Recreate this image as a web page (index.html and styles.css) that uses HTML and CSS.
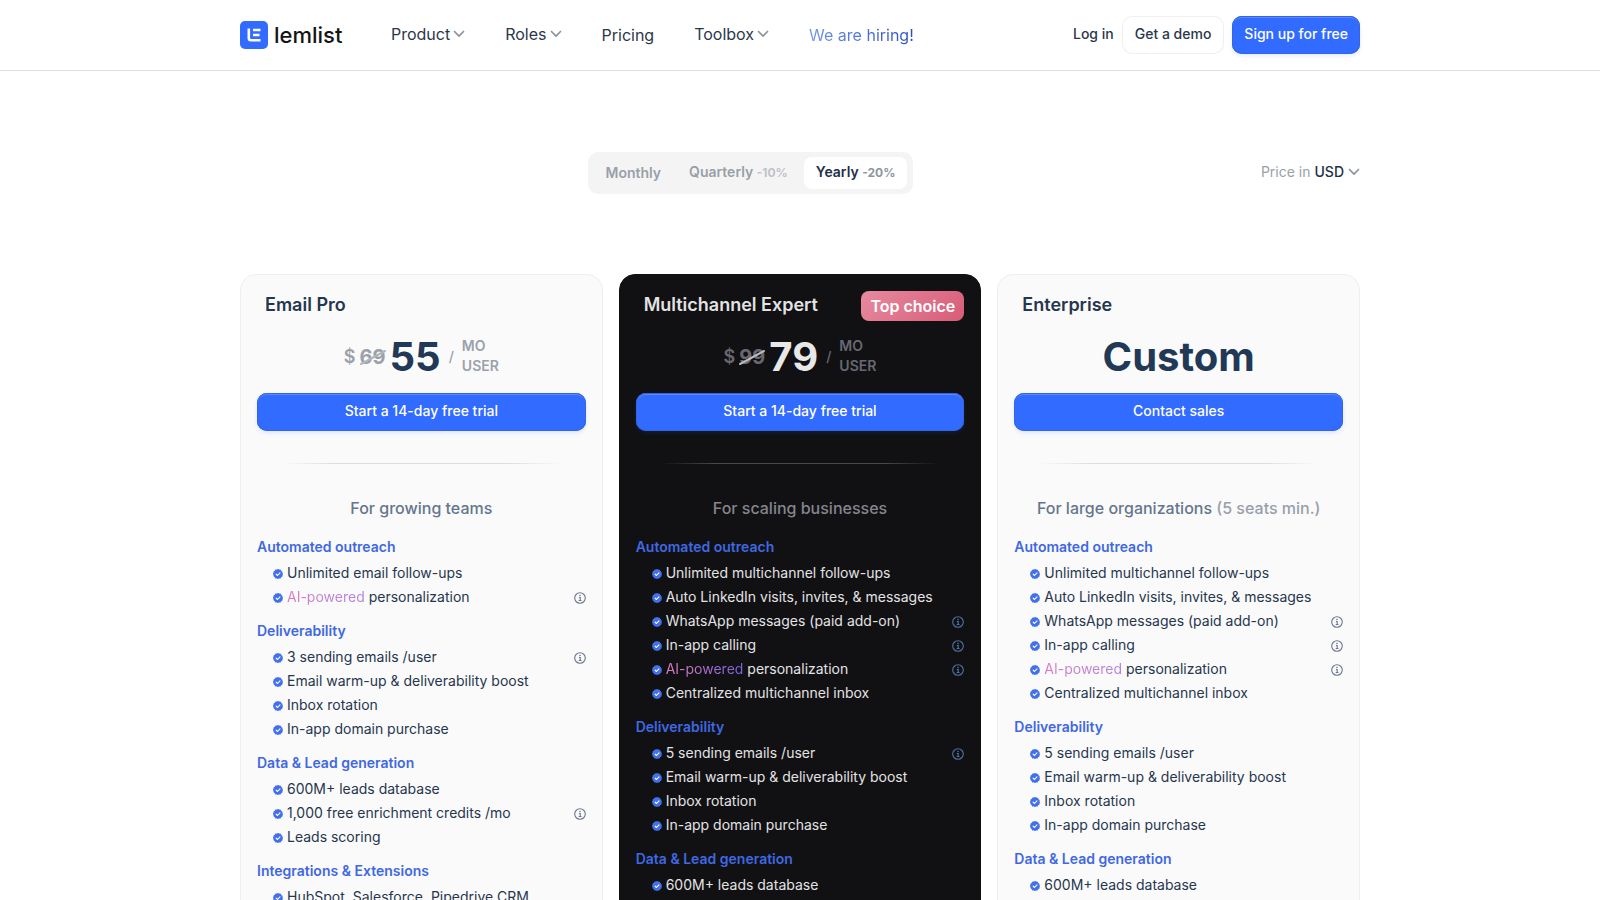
FILE: index.html
```html
<!DOCTYPE html>
<html lang="en">
<head>
<meta charset="utf-8">
<meta name="viewport" content="width=device-width, initial-scale=1">
<title>lemlist pricing</title>
<link rel="stylesheet" href="styles.css">
</head>
<body>
<svg class="sprite" aria-hidden="true">
  <symbol id="chevron" viewBox="0 0 12 12"><path d="M1.500 3.500 6 8.200l4.500-4.700" fill="none" stroke="currentColor" stroke-width="1.700" stroke-linecap="round" stroke-linejoin="round"/></symbol>
  <symbol id="check" viewBox="0 0 10 10"><path d="M5 0l1.300.6 1.450.05.6 1.300L9.500 3.100 9.600 4.500 10 5l-.4 1.300-.2 1.100-1.200.8-.7 1.200-1.400.1L5 10l-1.200-.5-1.400-.1-.7-1.200L.6 7.300.4 6 0 5l.4-1.300.2-1.100 1.200-.8.7-1.200L3.900.5z" fill="#4270ea"/><path d="M3.100 5.100 4.500 6.500 7 3.800" fill="none" stroke="#fff" stroke-width="1.100" stroke-linecap="round" stroke-linejoin="round"/></symbol>
  <symbol id="info" viewBox="0 0 12 12"><circle cx="6" cy="6" r="5.300" fill="none" stroke="currentColor" stroke-width="1.100"/><path d="M4.900 5.500h1.300v3M4.700 8.500h2.800" fill="none" stroke="currentColor" stroke-width="1.100"/><circle cx="6" cy="3.500" r=".8" fill="currentColor"/></symbol>
</svg>
<header class="header">
  <div class="container header-row">
    <a class="logo" href="#">
      <svg class="logo-mark" viewBox="0 0 28 28" aria-hidden="true"><rect width="28" height="28" rx="5" fill="#316bff"/><path d="M8.800 7.500v9.500q0 2.200 2.200 2.200h9.500M13 9h7.500M13 14h6.500" fill="none" stroke="#fff" stroke-width="2.600"/></svg>
      <span>lemlist</span>
    </a>
    <nav class="nav">
      <a class="has-menu" href="#">Product <svg class="chevron"><use href="#chevron"/></svg></a>
      <a class="has-menu" href="#">Roles <svg class="chevron"><use href="#chevron"/></svg></a>
      <a href="#">Pricing</a>
      <a class="has-menu" href="#">Toolbox <svg class="chevron"><use href="#chevron"/></svg></a>
      <a href="#"><span class="hiring">We are hiring!</span></a>
    </nav>
    <div class="actions">
      <a class="login" href="#">Log in</a>
      <a class="btn btn-light" href="#">Get a demo</a>
      <a class="btn btn-primary" href="#">Sign up for free</a>
    </div>
  </div>
</header>
<main class="container">
  <div class="controls">
    <div class="tabs" role="group" aria-label="Billing period">
      <button type="button" class="tab">Monthly</button>
      <button type="button" class="tab">Quarterly <small>-10%</small></button>
      <button type="button" class="tab active" aria-pressed="true">Yearly <small>-20%</small></button>
    </div>
    <div class="currency">
      <label for="currency">Price in</label>
      <select id="currency"><option>USD</option><option>EUR</option></select>
      <svg class="chevron" aria-hidden="true"><use href="#chevron"/></svg>
    </div>
  </div>
  <div class="plans">
    <section class="card">
      <div class="card-head"><h2>Email Pro</h2></div>
      <div class="price"><span class="sign">$</span><s class="old">69<svg viewBox="0 0 26 16" aria-hidden="true"><path d="M1 15 25 2"/></svg></s><strong>55</strong><span class="slash">/</span><span class="unit">MO<br>USER</span></div>
      <button type="button" class="btn btn-primary">Start a 14-day free trial</button>
      <hr>
      <p class="audience">For growing teams</p>
      <h3>Automated outreach</h3>
      <ul>
        <li><svg class="check"><use href="#check"/></svg><span>Unlimited email follow-ups</span></li>
        <li><svg class="check"><use href="#check"/></svg><span><span class="ai">AI-powered</span> personalization</span><svg class="info"><use href="#info"/></svg></li>
      </ul>
      <h3>Deliverability</h3>
      <ul>
        <li><svg class="check"><use href="#check"/></svg><span>3 sending emails /user</span><svg class="info"><use href="#info"/></svg></li>
        <li><svg class="check"><use href="#check"/></svg><span>Email warm-up &amp; deliverability boost</span></li>
        <li><svg class="check"><use href="#check"/></svg><span>Inbox rotation</span></li>
        <li><svg class="check"><use href="#check"/></svg><span>In-app domain purchase</span></li>
      </ul>
      <h3>Data &amp; Lead generation</h3>
      <ul>
        <li><svg class="check"><use href="#check"/></svg><span>600M+ leads database</span></li>
        <li><svg class="check"><use href="#check"/></svg><span>1,000 free enrichment credits /mo</span><svg class="info"><use href="#info"/></svg></li>
        <li><svg class="check"><use href="#check"/></svg><span>Leads scoring</span></li>
      </ul>
      <h3>Integrations &amp; Extensions</h3>
      <ul>
        <li><svg class="check"><use href="#check"/></svg><span>HubSpot, Salesforce, Pipedrive CRM</span></li>
      </ul>
    </section>
    <section class="card dark">
      <div class="card-head"><h2>Multichannel Expert</h2><span class="badge">Top choice</span></div>
      <div class="price"><span class="sign">$</span><s class="old">99<svg viewBox="0 0 26 16" aria-hidden="true"><path d="M1 15 25 2"/></svg></s><strong>79</strong><span class="slash">/</span><span class="unit">MO<br>USER</span></div>
      <button type="button" class="btn btn-primary">Start a 14-day free trial</button>
      <hr>
      <p class="audience">For scaling businesses</p>
      <h3>Automated outreach</h3>
      <ul>
        <li><svg class="check"><use href="#check"/></svg><span>Unlimited multichannel follow-ups</span></li>
        <li><svg class="check"><use href="#check"/></svg><span>Auto LinkedIn visits, invites, &amp; messages</span></li>
        <li><svg class="check"><use href="#check"/></svg><span>WhatsApp messages (paid add-on)</span><svg class="info"><use href="#info"/></svg></li>
        <li><svg class="check"><use href="#check"/></svg><span>In-app calling</span><svg class="info"><use href="#info"/></svg></li>
        <li><svg class="check"><use href="#check"/></svg><span><span class="ai">AI-powered</span> personalization</span><svg class="info"><use href="#info"/></svg></li>
        <li><svg class="check"><use href="#check"/></svg><span>Centralized multichannel inbox</span></li>
      </ul>
      <h3>Deliverability</h3>
      <ul>
        <li><svg class="check"><use href="#check"/></svg><span>5 sending emails /user</span><svg class="info"><use href="#info"/></svg></li>
        <li><svg class="check"><use href="#check"/></svg><span>Email warm-up &amp; deliverability boost</span></li>
        <li><svg class="check"><use href="#check"/></svg><span>Inbox rotation</span></li>
        <li><svg class="check"><use href="#check"/></svg><span>In-app domain purchase</span></li>
      </ul>
      <h3>Data &amp; Lead generation</h3>
      <ul>
        <li><svg class="check"><use href="#check"/></svg><span>600M+ leads database</span></li>
      </ul>
    </section>
    <section class="card">
      <div class="card-head"><h2>Enterprise</h2></div>
      <div class="price"><strong>Custom</strong></div>
      <button type="button" class="btn btn-primary">Contact sales</button>
      <hr>
      <p class="audience">For large organizations <span>(5 seats min.)</span></p>
      <h3>Automated outreach</h3>
      <ul>
        <li><svg class="check"><use href="#check"/></svg><span>Unlimited multichannel follow-ups</span></li>
        <li><svg class="check"><use href="#check"/></svg><span>Auto LinkedIn visits, invites, &amp; messages</span></li>
        <li><svg class="check"><use href="#check"/></svg><span>WhatsApp messages (paid add-on)</span><svg class="info"><use href="#info"/></svg></li>
        <li><svg class="check"><use href="#check"/></svg><span>In-app calling</span><svg class="info"><use href="#info"/></svg></li>
        <li><svg class="check"><use href="#check"/></svg><span><span class="ai">AI-powered</span> personalization</span><svg class="info"><use href="#info"/></svg></li>
        <li><svg class="check"><use href="#check"/></svg><span>Centralized multichannel inbox</span></li>
      </ul>
      <h3>Deliverability</h3>
      <ul>
        <li><svg class="check"><use href="#check"/></svg><span>5 sending emails /user</span></li>
        <li><svg class="check"><use href="#check"/></svg><span>Email warm-up &amp; deliverability boost</span></li>
        <li><svg class="check"><use href="#check"/></svg><span>Inbox rotation</span></li>
        <li><svg class="check"><use href="#check"/></svg><span>In-app domain purchase</span></li>
      </ul>
      <h3>Data &amp; Lead generation</h3>
      <ul>
        <li><svg class="check"><use href="#check"/></svg><span>600M+ leads database</span></li>
      </ul>
    </section>
  </div>
</main>
</body>
</html>
```
FILE: styles.css
```css
* { box-sizing: border-box; }
body {
  margin: 0;
  background: #fff;
  color: #26364f;
  font: 14px/24px Inter, "Liberation Sans", sans-serif;
}
a { color: inherit; text-decoration: none; }
button, select { font: inherit; color: inherit; }
.sprite { display: none; }
.container { max-width: 1168px; margin: 0 auto; padding: 0 24px; }

.header { border-bottom: 1px solid #dfdfdf; color: #2a374b; }
.header-row { display: flex; align-items: center; min-height: 70px; }
.logo { display: flex; align-items: center; gap: 6px; width: 103px; color: #151515; font-size: 22px; font-weight: 500; line-height: 28px; }
.logo-mark { flex: none; width: 28px; height: 28px; }
.nav { display: flex; gap: 40px; margin-left: 48px; font-size: 16px; }
.nav a { display: flex; align-items: center; gap: 3px; }
.nav .has-menu { padding-bottom: 2px; }
.chevron { width: 12px; height: 12px; color: #8d959f; }
.hiring { color: transparent; background: linear-gradient(90deg, #7497e6, #2c4fc4); background-clip: text; }
.actions { display: flex; align-items: center; gap: 8px; margin-left: auto; font-weight: 500; }
.login { padding-bottom: 2px; }

.btn {
  display: block;
  padding: 6px 12px 8px;
  border: 0;
  border-radius: 10px;
  font-weight: 500;
  line-height: 24px;
  text-align: center;
}
.btn-light { padding: 6px 13px 8px; box-shadow: inset 0 0 0 1px #efeff1; }
.btn-primary {
  background: #316bff;
  color: #fff;
  box-shadow: inset 0 0 0 1px #3463e4, inset 0 2px 0 #5d88fa, 0 2px 4px #316bff22;
}

.controls { display: flex; align-items: center; padding: 81px 0 80px; }
.tabs { display: flex; margin: 0 auto; padding: 5px 6px; border-radius: 10px; background: #f4f4f5; }
.tab { padding: 3px 12px 4px; border: 0; border-radius: 8px; background: none; color: #9a9fa8; font-weight: 600; }
.tab + .tab { margin-left: 4px; }
.tab small { font-size: 12px; font-weight: 700; color: #c0c3c9; }
.tab.active { background: #fff; color: #213048; }
.tab.active small { color: #8d959f; }
.currency { display: flex; align-items: center; gap: 4px; padding-bottom: 2px; color: #9a9fa8; }
.currency select { appearance: none; field-sizing: content; padding: 0; border: 0; background: none; color: #213048; font-weight: 500; }

.plans { display: grid; grid-template-columns: repeat(3, 1fr); gap: 16px; }
.card { padding: 16px; border: 1px solid #efeff1; border-radius: 16px; background: #fafafa; }
.card-head { display: flex; align-items: center; justify-content: space-between; height: 30px; padding-left: 8px; }
h2 { margin: 0 0 2px; font-size: 18px; line-height: 26px; font-weight: 600; }
.badge {
  padding: 3px 9px;
  border-radius: 8px;
  background: linear-gradient(135deg, #e78a9f, #d85c78);
  color: #fff;
  font-size: 16px;
  font-weight: 600;
}
.price { display: flex; align-items: center; justify-content: center; height: 72px; color: #9ba1ab; font-weight: 600; }
.price strong { color: #213856; font-size: 40px; line-height: 48px; font-weight: 700; }
.sign { margin-right: 4px; font-size: 18px; }
.old { position: relative; margin-right: 4px; font-size: 20px; font-weight: 700; text-decoration: none; }
.old svg { position: absolute; left: 0; top: 4px; width: 26px; height: 16px; fill: none; stroke: #b0b6bf; stroke-width: 2; }
.old svg path { stroke-linecap: round; }
.slash { margin: 0 8px; font-weight: 500; }
.unit { padding-bottom: 2px; line-height: 20px; }
.card .btn { width: 100%; }
hr {
  height: 1px;
  margin: 32px 24px 0;
  border: 0;
  background: linear-gradient(90deg, transparent, #dcdcde 20%, #dcdcde 80%, transparent);
}
.audience { margin: 32px 0 15px; color: #66758e; font-size: 16px; font-weight: 500; text-align: center; }
.audience span { color: #989fab; }
h3 { margin: 0 0 2px; color: #3f68e2; font-size: 14px; font-weight: 600; }
ul { margin: 0 0 10px; padding: 0 0 0 16px; list-style: none; }
li { display: flex; align-items: center; gap: 4px; }
.check { flex: none; width: 10px; height: 10px; margin-top: 2px; }
.info { flex: none; width: 12px; height: 12px; margin: 2px 0 0 auto; color: #6b768e; }
.ai { color: transparent; background: linear-gradient(90deg, #d97cc4, #b084e0); background-clip: text; }

.dark { border-color: #111113; background: #111113; color: #e3e3e5; }
.dark .price { color: #686872; }
.dark .price strong { color: #e8e8e8; }
.dark .old svg { stroke: #b8b8bd; }
.dark hr { background: linear-gradient(90deg, transparent, #48484c 20%, #48484c 80%, transparent); }
.dark .audience { color: #85858d; }
.dark .info { color: #4f74a8; }
.dark .ai { background: linear-gradient(90deg, #e07bc0, #7b62e0); background-clip: text; }
```
